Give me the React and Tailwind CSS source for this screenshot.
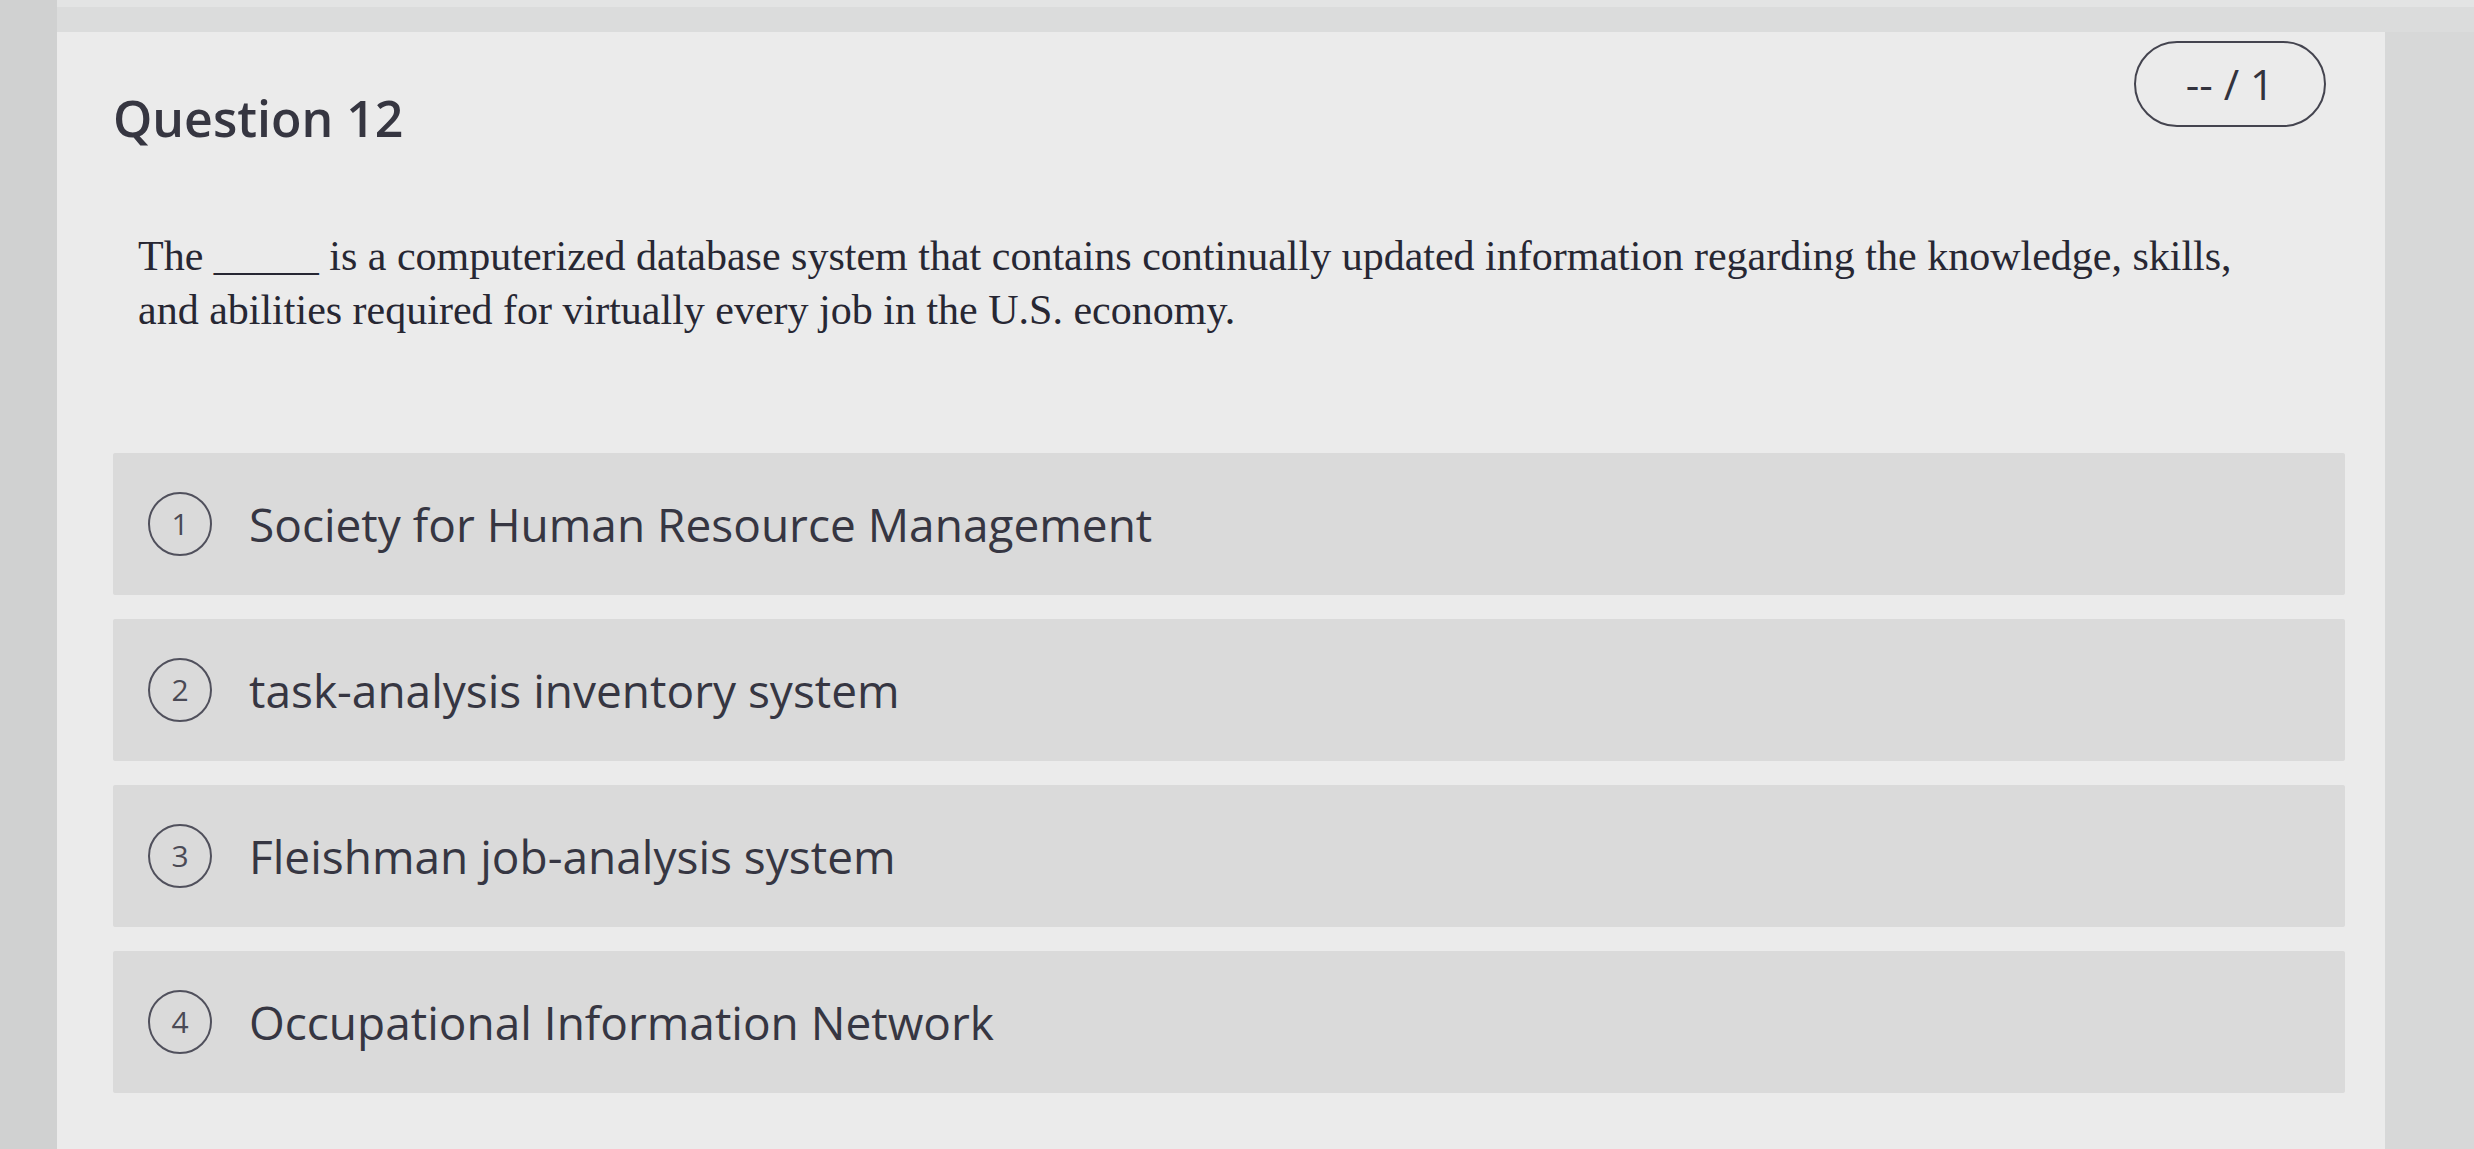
import React from 'react';

const options = [
  'Society for Human Resource Management',
  'task-analysis inventory system',
  'Fleishman job-analysis system',
  'Occupational Information Network',
];

const sans = { fontFamily: '"Open Sans", "Noto Sans", sans-serif' };

const OptionRow = ({ n, label }) => (
  <div className="flex items-center h-[142px] bg-[#dadada] rounded-[2px] pl-[35px]">
    <div className="flex items-center justify-center w-[64px] h-[64px] shrink-0 rounded-full border-[2.5px] border-[#50505c] text-[30px] text-[#4a4a55] leading-none">
      {n}
    </div>
    <span className="ml-[37px] text-[46px] text-[#363642] leading-none">{label}</span>
  </div>
);

const App = () => {
  return (
    <div className="w-full h-[1149px] overflow-hidden bg-[#d0d1d1] flex flex-col" style={sans}>
      <div className="h-[32px] shrink-0 bg-[#dbdcdc] border-t-[7px] border-[#e3e4e4] ml-[57px]" />
      <div className="flex flex-1">
        <div className="ml-[57px] w-[2328px] bg-[#ebebeb] pl-[56px] pr-[40px] pt-[9px]">
          <div className="flex justify-between items-start pr-[19px]">
            <h2 className="mt-[52px] text-[50px] leading-none font-semibold text-[#363641]">Question 12</h2>
            <div className="flex items-center justify-center w-[192px] h-[86px] rounded-full border-[2.5px] border-[#44444f] text-[42px] text-[#33333d] leading-none">
              -- / 1
            </div>
          </div>

          <p
            className="mt-[86px] ml-[25px] max-w-[2130px] text-[42px] leading-[54px] text-[#272733]"
            style={{ fontFamily: '"Liberation Serif", "Times New Roman", serif' }}
          >
            The _____ is a computerized database system that contains continually updated information regarding
            the knowledge, skills, and abilities required for virtually every job in the U.S. economy.
          </p>

          <div className="mt-[116px] flex flex-col gap-[24px]">
            {options.map((o, i) => (
              <OptionRow key={o} n={i + 1} label={o} />
            ))}
          </div>
        </div>
        <div className="flex-1 bg-[#d7d8d8]" />
      </div>
    </div>
  );
};

export default App;
